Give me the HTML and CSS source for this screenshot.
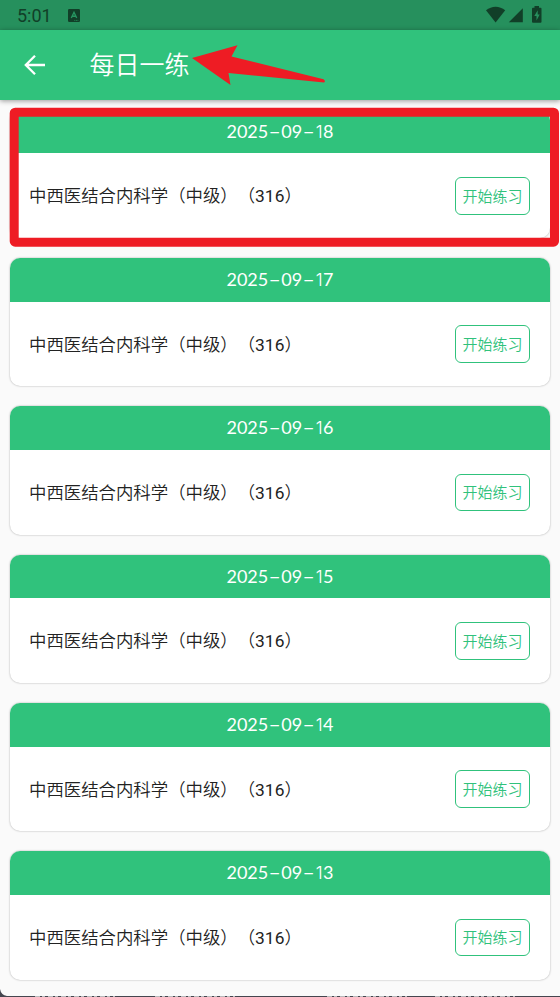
FILE: index.html
```html
<!DOCTYPE html>
<html lang="zh-CN">
<head>
<meta charset="utf-8">
<title>每日一练</title>
<link rel="stylesheet" href="styles.css">
</head>
<body>
<div class="screen">
  <div class="status">
    <span class="clock">5:01</span>
    <svg class="app-mark" width="12" height="13" viewBox="0 0 12 13"><rect width="12" height="13" rx="1.2" fill="#113f28"/><path d="M3.3 9 6 3.3 8.7 9M4.3 7.3h3.4" fill="none" stroke="#269560" stroke-width="1.4"/><path d="M6.3 11.4h4" stroke="#269560" stroke-width=".8" stroke-dasharray="1 .6"/></svg>
    <svg class="signals" width="58" height="18" viewBox="0 0 58 18" fill="#113f28"><path d="M0 4.2C5.800-.5 13.400-.5 19.200 4.200L9.600 16.500z"/><path d="M36.800 2.300V16.300H22.800z"/><path d="M48.500 0h4.500v1.800h1.500q1 0 1 1v13q0 1-1 1h-7.500q-1 0-1-1v-13q0-1 1-1h1.500z"/><path d="M51.700 4.200 48.300 10h2.200v4.600l3.200-6h-2z" fill="#27915e"/></svg>
  </div>
  <header class="appbar">
    <svg class="back" width="22" height="22" viewBox="0 0 22 22" fill="none" stroke="#fff" stroke-width="2.300"><path d="M21 11H2.500M11 1.800 1.800 11l9.200 9.200"/></svg>
    <h1>每日一练</h1>
  </header>
  <main class="list">
    <section class="card"><h2>2025<i>-</i>09<i>-</i><b>1</b>8</h2><div class="row"><span>中西医结合内科学（中级）（<em>316</em>）</span><button>开始练习</button></div></section>
    <section class="card"><h2>2025<i>-</i>09<i>-</i><b>1</b>7</h2><div class="row"><span>中西医结合内科学（中级）（<em>316</em>）</span><button>开始练习</button></div></section>
    <section class="card"><h2>2025<i>-</i>09<i>-</i><b>1</b>6</h2><div class="row"><span>中西医结合内科学（中级）（<em>316</em>）</span><button>开始练习</button></div></section>
    <section class="card"><h2>2025<i>-</i>09<i>-</i><b>1</b>5</h2><div class="row"><span>中西医结合内科学（中级）（<em>316</em>）</span><button>开始练习</button></div></section>
    <section class="card"><h2>2025<i>-</i>09<i>-</i><b>1</b>4</h2><div class="row"><span>中西医结合内科学（中级）（<em>316</em>）</span><button>开始练习</button></div></section>
    <section class="card"><h2>2025<i>-</i>09<i>-</i><b>1</b>3</h2><div class="row"><span>中西医结合内科学（中级）（<em>316</em>）</span><button>开始练习</button></div></section>
  </main>
  <svg class="marks" width="560" height="997" viewBox="0 0 560 997">
    <path d="M192 58 237.500 45.300 231.500 56.500 323.500 79.300Q326 81 324 82.500L228.500 73 230.500 85z" fill="#ee1c24"/>
    <rect x="14.200" y="112.200" width="540.300" height="130" rx="1" fill="none" stroke="#ee1c24" stroke-width="9" stroke-linejoin="round"/>
    <path d="M0 989Q1 995 7 996H560V997H0z" fill="#45464f"/>
    <path d="M35 996.500h80M155 996.500h80M327 996.500h80M435 996.500h80" stroke="#b9b9bb" stroke-dasharray="5 2 3 3"/>
  </svg>
</div>
</body>
</html>
```
FILE: styles.css
```css
* { box-sizing: border-box; }
body { margin: 0; }
.screen {
  position: relative;
  width: 560px;
  height: 997px;
  overflow: hidden;
  background: #fafafa;
  font-family: Roboto, "Noto Sans CJK SC", sans-serif;
  text-spacing-trim: space-all;
}
.status {
  height: 30px;
  display: flex;
  align-items: center;
  padding: 0 16px 0 17px;
  background: #26905d;
  color: #113f28;
}
.clock { font-size: 18px; line-height: 30px; width: 51px; font-weight: 450; padding-top: 2px; }
.signals { margin-left: auto; }
.appbar {
  position: relative;
  height: 70px;
  display: flex;
  align-items: center;
  padding-left: 24px;
  background: #30c27c;
  box-shadow: 0 1px 5px rgba(0, 0, 0, .4);
}
h1 {
  margin: 2px 0 0 43.500px;
  color: #fff;
  font-size: 25px;
  line-height: 36px;
  font-weight: 350;
}
.list {
  display: flex;
  flex-direction: column;
  gap: 19.900px;
  padding: 9.600px 10px 0;
}
.card {
  flex: none;
  height: 128.450px;
  overflow: hidden;
  border-radius: 10px;
  background: #fff;
  box-shadow: 0 0 2px rgba(0, 0, 0, .35);
}
h2 {
  height: 43.700px;
  margin: 0;
  background: #30c27c;
  color: #fff;
  font: 400 18px/43px Lato, sans-serif;
  text-align: center;
}
h2 i {
  display: inline-block;
  width: 13px;
  font-style: normal;
  transform: scaleX(1.9);
}
h2 b {
  display: inline-block;
  width: 8px;
  font: 300 17.500px/1 Inter, sans-serif;
}
.row {
  height: 85px;
  display: flex;
  align-items: center;
  justify-content: space-between;
  padding: 0 20px 0 19px;
  color: #222;
  font-size: 17.400px;
  white-space: nowrap;
}
.row span { margin-top: -2px; font-weight: 350; }
.row em { font-style: normal; font-weight: 390; }
button {
  width: 75px;
  height: 37.500px;
  padding: 0;
  border: 1.400px solid #30c27c;
  border-radius: 6px;
  background: #fff;
  color: #30c27c;
  font: 350 15px/34px "Noto Sans CJK SC", sans-serif;
}
.marks { position: absolute; left: 0; top: 0; }
```
